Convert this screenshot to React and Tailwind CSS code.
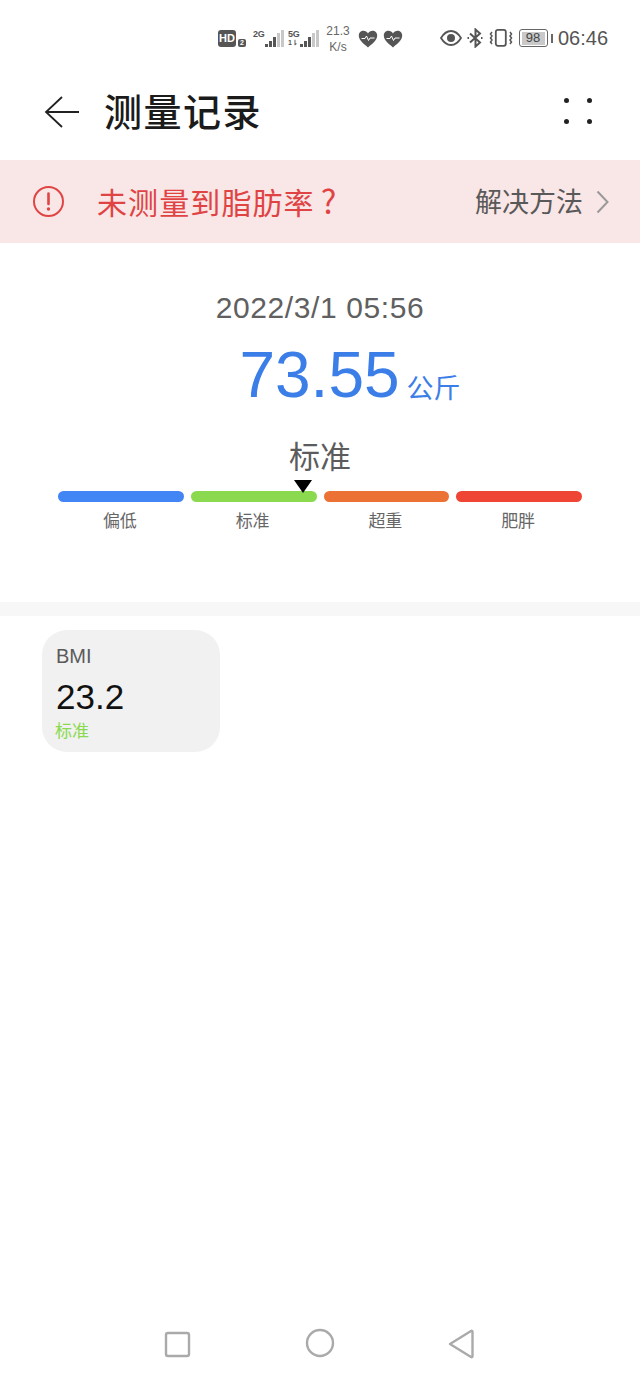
const CJK = '"Noto Sans CJK SC", "Noto Sans", sans-serif';
const LATIN = '"Liberation Sans", sans-serif';

function Signal({ label, extra }) {
  const bars = [3, 6, 10, 14, 17];
  return (
    <div className="relative w-[31px] h-[22px]">
      <span className="absolute left-0 top-[4px] text-[9px] leading-[10px] font-bold text-[#555] tracking-[-0.2px]">{label}</span>
      {extra && <span className="absolute left-0 bottom-[0px] text-[7px] leading-[8px] font-bold text-[#555]">1⇂</span>}
      <div className="absolute right-0 bottom-0 flex items-end gap-[1px]">
        {bars.map((h, i) => (
          <div key={i} className={`w-[3px] ${i < 3 ? "bg-[#555]" : "bg-[#c8c8c8]"}`} style={{ height: h }} />
        ))}
      </div>
    </div>
  );
}

function Heart() {
  return (
    <svg width="20" height="18" viewBox="0 0 20 18">
      <path d="M10 17.5 C6 14 .8 10.5 .8 5.6 C.8 2.6 3 .8 5.4 .8 C7.4 .8 9 1.9 10 3.4 C11 1.9 12.6 .8 14.6 .8 C17 .8 19.2 2.6 19.2 5.6 C19.2 10.5 14 14 10 17.5Z" fill="#555" />
      <path d="M3.5 8.5 H7 L8.5 6 L10.5 10.5 L12 8 H16.5" fill="none" stroke="#fff" strokeWidth="1" />
    </svg>
  );
}

function StatusBar() {
  return (
    <div className="h-[77px] relative text-[#555]" style={{ fontFamily: LATIN }}>
      <div className="absolute left-[218px] top-[30px] flex items-end">
        <div className="w-[18px] h-[17px] bg-[#555] rounded-[3px] text-white text-[11px] leading-[17px] font-bold text-center">HD</div>
        <div className="ml-[2px] w-[8px] h-[8px] bg-[#555] rounded-[2px] text-white text-[7px] leading-[8px] font-bold text-center">2</div>
      </div>
      <div className="absolute left-[253px] top-[25px] flex gap-[4px]">
        <Signal label="2G" />
        <Signal label="5G" extra />
      </div>
      <div className="absolute left-[325px] top-[23px] w-[26px] text-center text-[12px] leading-[16px] text-[#666]">
        <div>21.3</div>
        <div>K/s</div>
      </div>
      <div className="absolute left-[358px] top-[30px] flex gap-[5px]">
        <Heart />
        <Heart />
      </div>
      <div className="absolute left-[440px] top-[27px] flex items-center h-[22px]">
        <svg width="22" height="16" viewBox="0 0 22 16">
          <path d="M1 8 C4 3 7.500 1 11 1 C14.500 1 18 3 21 8 C18 13 14.500 15 11 15 C7.500 15 4 13 1 8Z" fill="none" stroke="#555" strokeWidth="1.800" />
          <circle cx="11" cy="8" r="4" fill="#555" />
        </svg>
        <svg className="ml-[5px]" width="17" height="20" viewBox="0 0 17 20">
          <path d="M3 5.500 L13 14.500 L8.500 18.500 V1.500 L13 5.500 L3 14.500" fill="none" stroke="#555" strokeWidth="2" />
          <path d="M.5 10 H3 M14 10 H16.500" stroke="#555" strokeWidth="2" strokeDasharray="1.500 1" />
        </svg>
        <svg className="ml-[5px]" width="24" height="20" viewBox="0 0 24 20">
          <rect x="6.800" y="1.800" width="10" height="16" rx="2" fill="none" stroke="#555" strokeWidth="1.800" />
          <path d="M3 4 L1.500 6 L3 8 L1.500 10 L3 12 L1.500 14 L3 16 M21 4 L22.500 6 L21 8 L22.500 10 L21 12 L22.500 14 L21 16" fill="none" stroke="#555" strokeWidth="1.500" />
        </svg>
        <div className="ml-[6px] w-[29px] h-[18px] rounded-[3px] border-[1.5px] border-[#666] p-[1.500px]">
          <div className="w-[23px] h-full bg-[#c9c9c9] text-[#444] text-[13px] leading-[12px] text-center">98</div>
        </div>
        <div className="ml-[3px] w-[2px] h-[9px] bg-[#666]" />
        <span className="ml-[5px] text-[20px] leading-[22px] text-[#555]">06:46</span>
      </div>
    </div>
  );
}

function Header() {
  return (
    <div className="h-[83px] flex items-center pb-[13px]">
      <svg className="ml-[44px] mb-[1px]" width="36" height="32" viewBox="0 0 36 32">
        <path d="M35 16 H2 M18 1 L2 16 L18 31" fill="none" stroke="#222" strokeWidth="1.800" />
      </svg>
      <h1 className="ml-[24px] mb-[4px] text-[38px] leading-[44px] font-medium text-[#1b1b1b] tracking-[1.500px]">测量记录</h1>
      <div className="ml-auto mr-[48px] mb-[3px] grid grid-cols-2 gap-x-[18px] gap-y-[16px]">
        <i className="block w-[5px] h-[5px] rounded-full bg-[#222]" />
        <i className="block w-[5px] h-[5px] rounded-full bg-[#222]" />
        <i className="block w-[5px] h-[5px] rounded-full bg-[#222]" />
        <i className="block w-[5px] h-[5px] rounded-full bg-[#222]" />
      </div>
    </div>
  );
}

function Banner() {
  return (
    <div className="h-[83px] bg-[#f9e6e6] flex items-center pl-[33px] pr-[31px]">
      <svg width="31" height="31" viewBox="0 0 31 31">
        <circle cx="15.500" cy="15.500" r="14.500" fill="none" stroke="#e04545" strokeWidth="2" />
        <path d="M15.500 7.500 V18" stroke="#e04545" strokeWidth="2.600" strokeLinecap="round" />
        <circle cx="15.500" cy="23" r="1.700" fill="#e04545" />
      </svg>
      <span className="ml-[33px] text-[30px] leading-[40px] text-[#e04343] tracking-[1.100px] -translate-y-[1px]">
        未测量到脂肪率<span className="ml-[6px] text-[33px]">?</span>
      </span>
      <span className="ml-auto text-[27px] leading-[36px] text-[#595959] -translate-y-[1px]">解决方法</span>
      <svg className="ml-[13px]" width="13" height="24" viewBox="0 0 13 24">
        <path d="M1.500 1.500 L11.500 12 L1.500 22.500" fill="none" stroke="#999" strokeWidth="2" />
      </svg>
    </div>
  );
}

const SEGMENTS = [
  { name: "偏低", color: "bg-[#4285f4]" },
  { name: "标准", color: "bg-[#8ad94f]" },
  { name: "超重", color: "bg-[#ec7135]" },
  { name: "肥胖", color: "bg-[#ee4535]" },
];

function Summary() {
  return (
    <div className="h-[359px] flex flex-col items-center">
      <div className="mt-[47px] text-[30px] leading-[36px] text-[#606060] tracking-[0.6px]" style={{ fontFamily: LATIN }}>2022/3/1 05:56</div>
      <div className="mt-[15px] h-[68px] flex items-end text-[#3b7ee8] pl-[60px]">
        <span className="text-[64px] leading-[68px]" style={{ fontFamily: LATIN }}>73.55</span>
        <span className="ml-[7px] mb-[6px] text-[27px] leading-[32px]">公斤</span>
      </div>
      <div className="mt-[25px] text-[31px] leading-[42px] text-[#5c5c5c]">标准</div>
      <div className="relative mt-[15px] w-[524px] grid grid-cols-4 gap-[7px]">
        {SEGMENTS.map((s) => (
          <div key={s.name} className="flex flex-col items-center">
            <div className={`w-full h-[11px] rounded-full ${s.color}`} />
            <span className="mt-[6px] pr-[2px] text-[17px] leading-[24px] text-[#666]">{s.name}</span>
          </div>
        ))}
        <svg className="absolute left-[236px] top-[-11px]" width="18" height="13" viewBox="0 0 18 13">
          <path d="M0 0 H18 L9 13Z" fill="#000" />
        </svg>
      </div>
    </div>
  );
}

function BmiCard() {
  return (
    <div className="ml-[42px] mt-[14px] w-[178px] h-[122px] rounded-[25px] bg-[#f1f1f1] pl-[14px] pt-[13px]">
      <div className="text-[20px] leading-[26px] text-[#5a5a5a]" style={{ fontFamily: LATIN }}>BMI</div>
      <div className="mt-[8px] text-[35px] leading-[40px] text-[#111]" style={{ fontFamily: LATIN }}>23.2</div>
      <div className="-ml-[1px] mt-[1px] text-[17px] leading-[24px] text-[#8ad94f]">标准</div>
    </div>
  );
}

function NavBar() {
  return (
    <div className="absolute bottom-[17px] left-0 w-full h-[34px]">
      <svg width="640" height="34" viewBox="0 0 640 34">
        <rect x="166" y="7" width="23" height="23" rx="2" fill="none" stroke="#aaa" strokeWidth="2.400" />
        <circle cx="320" cy="17" r="13" fill="none" stroke="#aaa" strokeWidth="2.400" />
        <path d="M450 18 L471 5 C472 4.500 472.500 5 472.500 6 V30 C472.500 31 472 31.500 471 31 Z" fill="none" stroke="#aaa" strokeWidth="2.400" strokeLinejoin="round" />
      </svg>
    </div>
  );
}

export default function App() {
  return (
    <div className="relative w-[640px] h-[1377px] bg-white overflow-hidden" style={{ fontFamily: CJK }}>
      <StatusBar />
      <Header />
      <Banner />
      <Summary />
      <div className="h-[14px] bg-[#f7f7f7]" />
      <BmiCard />
      <NavBar />
    </div>
  );
}
